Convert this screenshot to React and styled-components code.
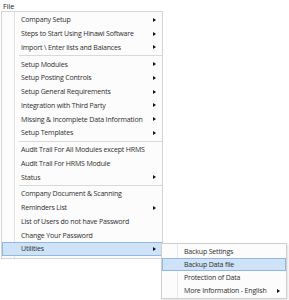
import React from "react";
import styled, { createGlobalStyle } from "styled-components";

const Global = createGlobalStyle`
  html, body { margin: 0; padding: 0; background: #ffffff; }
  body { font-family: "Open Sans", "Noto Sans", sans-serif; }
`;

const Page = styled.div`
  width: 289px;
  height: 300px;
  overflow: hidden;
  position: relative;
`;

const MenuBar = styled.div`
  height: 11px;
  display: flex;
  align-items: center;
  padding-left: 3px;
  font-size: 7.2px;
  color: #222;
`;

const Menu = styled.div`
  margin-left: 1px;
  width: 160px;
  border: 1px solid #d4d4d4;
  background: #fcfcfc;
  padding: 1px 0 2px 0;
  position: relative;
  background-image: linear-gradient(to right, transparent 12px, #e2e3e3 12px, #e2e3e3 13px, #ffffff 13px, #ffffff 14px, transparent 14px);
`;

const Item = styled.div`
  position: relative;
  height: ${(p) => p.$h}px;
  box-sizing: border-box;
  display: flex;
  align-items: center;
  padding-left: ${(p) => p.$indent}px;
  padding-right: 5px;
  font-size: 7px;
  letter-spacing: -0.17px;
  color: #2e2e2e;
  white-space: nowrap;
  border: 1px solid ${(p) => (p.$active ? "#8fb8e2" : "transparent")};
  background: ${(p) => (p.$active ? "#cfe3f8" : "transparent")};
`;

const Label = styled.span`
  flex: 1;
`;

const Arrow = styled.span`
  width: 0;
  height: 0;
  border-top: 2.5px solid transparent;
  border-bottom: 2.5px solid transparent;
  border-left: 3px solid #111;
`;

const Separator = styled.div`
  height: 3px;
  display: flex;
  align-items: center;
  padding-left: 17px;
  &::after {
    content: "";
    flex: 1;
    height: 1px;
    background: #d9d9d9;
  }
`;

const SubMenu = styled.div`
  position: absolute;
  left: 100%;
  top: 0px;
  width: 124px;
  border: 1px solid #cfcfcf;
  background: #fcfcfc;
  padding: 1px 0 1px 0;
  box-shadow: 1px 1px 2px rgba(0, 0, 0, 0.12);
  background-image: linear-gradient(to right, transparent 15px, #e8e8e8 15px, #e8e8e8 16px, transparent 16px);
  z-index: 2;
`;

const mainGroups = [
  [
    ["Company Setup", true],
    ["Steps to Start Using Hinawi Software", true],
    ["Import \\ Enter lists and Balances", true],
  ],
  [
    ["Setup Modules", true],
    ["Setup Posting Controls", true],
    ["Setup General Requirements", true],
    ["Integration with Third Party", true],
    ["Missing & Incomplete Data Information", true],
    ["Setup Templates", true],
  ],
  [
    ["Audit Trail For All Modules except HRMS", false],
    ["Audit Trail For HRMS Module", false],
    ["Status", true],
  ],
  [
    ["Company Document & Scanning", false],
    ["Reminders List", true],
    ["List of Users do not have Password", false],
    ["Change Your  Password", false],
    ["Utilities", true, true],
  ],
];

const subItems = [
  ["Backup Settings", false],
  ["Backup Data file", false, true],
  ["Protection of Data", false],
  ["More Information - English", true],
];

export default function App() {
  return (
    <Page>
      <Global />
      <MenuBar>File</MenuBar>
      <Menu>
        {mainGroups.map((group, gi) => (
          <React.Fragment key={gi}>
            {gi > 0 && <Separator />}
            {group.map(([label, arrow, active]) => (
              <Item key={label} $h={13.75} $indent={18} $active={active}>
                <Label>{label}</Label>
                {arrow && <Arrow />}
                {label === "Utilities" && (
                  <SubMenu>
                    {subItems.map(([s, sa, sact]) => (
                      <Item key={s} $h={13} $indent={21} $active={sact}>
                        <Label>{s}</Label>
                        {sa && <Arrow />}
                      </Item>
                    ))}
                  </SubMenu>
                )}
              </Item>
            ))}
          </React.Fragment>
        ))}
      </Menu>
    </Page>
  );
}
